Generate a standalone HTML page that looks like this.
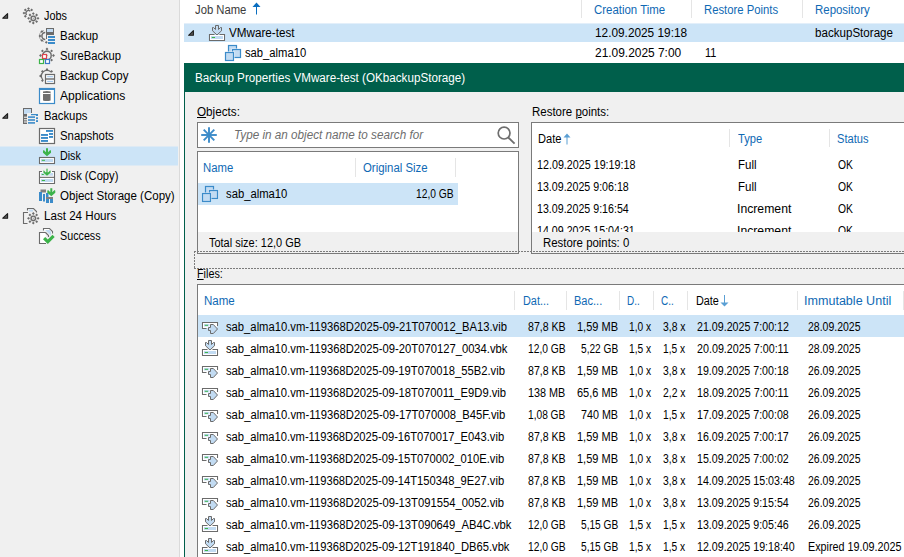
<!DOCTYPE html>
<html><head><meta charset="utf-8"><style>
html,body{margin:0;padding:0;}
body{width:904px;height:557px;position:relative;overflow:hidden;background:#fff;font-family:"Liberation Sans", sans-serif;font-size:12px;line-height:16px;}
u{text-decoration:underline;text-underline-offset:1px;}
</style></head><body>
<div style="position:absolute;left:0px;top:0px;width:179px;height:557px;background:#f0f0f0;"></div>
<div style="position:absolute;left:179px;top:0px;width:1px;height:557px;background:#dadada;"></div>
<div style="position:absolute;left:0px;top:146px;width:178px;height:1px;background:#deeaf4;"></div>
<div style="position:absolute;left:0px;top:147px;width:178px;height:18px;background:#cce4f7;"></div>
<div style="position:absolute;left:0px;top:165px;width:178px;height:1px;background:#deeaf4;"></div>
<div style="position:absolute;left:184px;top:23px;width:720px;height:1px;background:#e3effa;"></div>
<div style="position:absolute;left:184px;top:24px;width:720px;height:18px;background:#cce4f7;"></div>
<div style="position:absolute;left:581px;top:0px;width:1px;height:18px;background:#e5e5e5;"></div>
<div style="position:absolute;left:691px;top:0px;width:1px;height:18px;background:#e5e5e5;"></div>
<div style="position:absolute;left:802px;top:0px;width:1px;height:18px;background:#e5e5e5;"></div>
<div style="position:absolute;left:184px;top:63px;width:720px;height:29px;background:#005f4b;"></div>
<div style="position:absolute;left:184px;top:92px;width:1px;height:465px;background:#005f4b;"></div>
<div style="position:absolute;left:185px;top:92px;width:719px;height:465px;background:#f0f0f0;"></div>
<div style="position:absolute;left:197px;top:122px;width:322px;height:26px;box-sizing:border-box;border:1px solid #7a7a7a;background:#fff;"></div>
<div style="position:absolute;left:197px;top:151px;width:322px;height:103px;box-sizing:border-box;border:1px solid #7a7a7a;background:#fff;"></div>
<div style="position:absolute;left:198px;top:232px;width:320px;height:21px;background:#f0f0f0;"></div>
<div style="position:absolute;left:198px;top:183px;width:260px;height:22px;background:#cce4f7;"></div>
<div style="position:absolute;left:355px;top:158px;width:1px;height:19px;background:#e5e5e5;"></div>
<div style="position:absolute;left:455px;top:158px;width:1px;height:19px;background:#e5e5e5;"></div>
<div style="position:absolute;left:531px;top:122px;width:400px;height:132px;box-sizing:border-box;border:1px solid #7a7a7a;background:#fff;"></div>
<div style="position:absolute;left:729px;top:129px;width:1px;height:18px;background:#e5e5e5;"></div>
<div style="position:absolute;left:829px;top:129px;width:1px;height:18px;background:#e5e5e5;"></div>
<div style="position:absolute;left:197px;top:284px;width:720px;height:300px;box-sizing:border-box;border:1px solid #7a7a7a;background:#fff;"></div>
<div style="position:absolute;left:198px;top:315px;width:706px;height:22px;background:#cce4f7;"></div>
<div style="position:absolute;left:514px;top:291px;width:1px;height:19px;background:#e5e5e5;"></div>
<div style="position:absolute;left:566px;top:291px;width:1px;height:19px;background:#e5e5e5;"></div>
<div style="position:absolute;left:619px;top:291px;width:1px;height:19px;background:#e5e5e5;"></div>
<div style="position:absolute;left:653px;top:291px;width:1px;height:19px;background:#e5e5e5;"></div>
<div style="position:absolute;left:687px;top:291px;width:1px;height:19px;background:#e5e5e5;"></div>
<div style="position:absolute;left:797px;top:291px;width:1px;height:19px;background:#e5e5e5;"></div>
<div style="position:absolute;left:903px;top:291px;width:1px;height:19px;background:#e5e5e5;"></div>
<svg style="position:absolute;left:0;top:0;overflow:visible" width="1" height="1"><path d="M7.6 13.6 L7.6 18.2 L2.8 18.2 Z" fill="#5a5a5a" stroke="#1c1c1c" stroke-width="1.1" stroke-linejoin="round"/></svg>
<svg style="position:absolute;left:0;top:0;overflow:visible" width="1" height="1"><path d="M7.6 113.6 L7.6 118.19999999999999 L2.8 118.19999999999999 Z" fill="#5a5a5a" stroke="#1c1c1c" stroke-width="1.1" stroke-linejoin="round"/></svg>
<svg style="position:absolute;left:0;top:0;overflow:visible" width="1" height="1"><path d="M7.6 213.6 L7.6 218.2 L2.8 218.2 Z" fill="#5a5a5a" stroke="#1c1c1c" stroke-width="1.1" stroke-linejoin="round"/></svg>
<svg style="position:absolute;left:252px;top:2px" width="9" height="13" viewBox="0 0 9 13"><path d="M4.5 0.5 L8.5 5 L5 5 L5 12.5 L4 12.5 L4 5 L0.5 5 Z" fill="#0a6ec0"/></svg>
<svg style="position:absolute;left:0;top:0;overflow:visible" width="1" height="1"><path d="M193.4 30.7 L193.4 35.3 L188.6 35.3 Z" fill="#5a5a5a" stroke="#1c1c1c" stroke-width="1.1" stroke-linejoin="round"/></svg>
<svg style="position:absolute;left:563px;top:133px" width="8" height="12" viewBox="0 0 8 12"><path d="M4 0.5 L7.5 4.5 L4.5 4.5 L4.5 11.5 L3.5 11.5 L3.5 4.5 L0.5 4.5 Z" fill="#5a9fd4"/></svg>
<svg style="position:absolute;left:720px;top:294px" width="9" height="13" viewBox="0 0 9 13"><path d="M4.5 12.5 L8.5 8.5 L5 8.5 L5 1 L4 1 L4 8.5 L0.5 8.5 Z" fill="#5a9fd4"/></svg>
<svg style="position:absolute;left:22px;top:7px" width="18" height="18" viewBox="0 0 18 18"><rect x="5.50" y="0.60" width="2" height="2" fill="#6b6b6b" transform="rotate(45 6.50 1.60)"/><rect x="8.68" y="1.92" width="2" height="2" fill="#6b6b6b" transform="rotate(45 9.68 2.92)"/><rect x="2.32" y="8.28" width="2" height="2" fill="#6b6b6b" transform="rotate(45 3.32 9.28)"/><rect x="1.00" y="5.10" width="2" height="2" fill="#6b6b6b" transform="rotate(45 2.00 6.10)"/><rect x="2.32" y="1.92" width="2" height="2" fill="#6b6b6b" transform="rotate(45 3.32 2.92)"/><path d="M4.7 7.9 A2.5 2.5 0 0 1 8.3 4.3" fill="none" stroke="#6b6b6b" stroke-width="1.3"/><rect x="10.30" y="5.60" width="2" height="2" fill="#6b6b6b" transform="rotate(45 11.30 6.60)"/><rect x="13.62" y="6.98" width="2" height="2" fill="#6b6b6b" transform="rotate(45 14.62 7.98)"/><rect x="15.00" y="10.30" width="2" height="2" fill="#6b6b6b" transform="rotate(45 16.00 11.30)"/><rect x="13.62" y="13.62" width="2" height="2" fill="#6b6b6b" transform="rotate(45 14.62 14.62)"/><rect x="10.30" y="15.00" width="2" height="2" fill="#6b6b6b" transform="rotate(45 11.30 16.00)"/><rect x="6.98" y="13.62" width="2" height="2" fill="#6b6b6b" transform="rotate(45 7.98 14.62)"/><rect x="5.60" y="10.30" width="2" height="2" fill="#6b6b6b" transform="rotate(45 6.60 11.30)"/><rect x="6.98" y="6.98" width="2" height="2" fill="#6b6b6b" transform="rotate(45 7.98 7.98)"/><circle cx="11.3" cy="11.3" r="2.2" fill="none" stroke="#6b6b6b" stroke-width="1.4"/><circle cx="11.3" cy="11.3" r="3.20" fill="none" stroke="#6b6b6b" stroke-width="0.5" opacity="0.35"/><circle cx="11.3" cy="11.3" r="0.7" fill="#6b6b6b" opacity="0.6"/></svg>
<svg style="position:absolute;left:38px;top:27px" width="18" height="18" viewBox="0 0 18 18"><rect x="7.30" y="14.30" width="2" height="2" fill="#6b6b6b" transform="rotate(45 8.30 15.30)"/><rect x="2.85" y="12.45" width="2" height="2" fill="#6b6b6b" transform="rotate(45 3.85 13.45)"/><rect x="1.00" y="8.00" width="2" height="2" fill="#6b6b6b" transform="rotate(45 2.00 9.00)"/><rect x="2.85" y="3.55" width="2" height="2" fill="#6b6b6b" transform="rotate(45 3.85 4.55)"/><path d="M7.3 5.6 A3.3 3.3 0 0 0 7.3 12.4" fill="none" stroke="#6b6b6b" stroke-width="1.5"/><path d="M6 3.5 A5.6 5.6 0 0 0 6 14.5" fill="none" stroke="#6b6b6b" stroke-width="0.7" opacity="0.7"/><rect x="8" y="1" width="8" height="7" fill="#6b6b6b"/><rect x="9" y="2" width="6" height="3" fill="#c2dbf2"/><rect x="8" y="7" width="1" height="5" fill="#6b6b6b"/><rect x="10" y="9" width="7" height="2" fill="#3b8bc9"/><rect x="10" y="12" width="7" height="2" fill="#3b8bc9"/><rect x="10" y="15" width="7" height="2" fill="#3b8bc9"/></svg>
<svg style="position:absolute;left:38px;top:47px" width="18" height="18" viewBox="0 0 18 18"><rect x="8.00" y="1.00" width="2" height="2" fill="#6b6b6b" transform="rotate(45 9.00 2.00)"/><rect x="12.60" y="2.90" width="2" height="2" fill="#6b6b6b" transform="rotate(45 13.60 3.90)"/><rect x="14.50" y="7.50" width="2" height="2" fill="#6b6b6b" transform="rotate(45 15.50 8.50)"/><rect x="12.60" y="12.10" width="2" height="2" fill="#6b6b6b" transform="rotate(45 13.60 13.10)"/><rect x="8.00" y="14.00" width="2" height="2" fill="#6b6b6b" transform="rotate(45 9.00 15.00)"/><rect x="3.40" y="12.10" width="2" height="2" fill="#6b6b6b" transform="rotate(45 4.40 13.10)"/><rect x="1.50" y="7.50" width="2" height="2" fill="#6b6b6b" transform="rotate(45 2.50 8.50)"/><rect x="3.40" y="2.90" width="2" height="2" fill="#6b6b6b" transform="rotate(45 4.40 3.90)"/><circle cx="9" cy="8.5" r="4.2" fill="none" stroke="#6b6b6b" stroke-width="1.4"/><circle cx="9" cy="8.5" r="5.00" fill="none" stroke="#6b6b6b" stroke-width="0.5" opacity="0.35"/><circle cx="9" cy="8.5" r="0.7" fill="#6b6b6b" opacity="0.6"/><rect x="4.5" y="7.5" width="4" height="4" fill="#fff" stroke="#e0434b" stroke-width="1.2"/><rect x="1.5" y="12.5" width="4" height="4" fill="#fff" stroke="#3cb34a" stroke-width="1.2"/><rect x="7.5" y="12.5" width="4" height="4" fill="#fff" stroke="#3a78c9" stroke-width="1.2"/></svg>
<svg style="position:absolute;left:38px;top:67px" width="18" height="18" viewBox="0 0 18 18"><rect x="8.00" y="1.50" width="2" height="2" fill="#6b6b6b" transform="rotate(45 9.00 2.50)"/><rect x="1.50" y="8.00" width="2" height="2" fill="#6b6b6b" transform="rotate(45 2.50 9.00)"/><rect x="3.40" y="3.40" width="2" height="2" fill="#6b6b6b" transform="rotate(45 4.40 4.40)"/><rect x="12.60" y="3.40" width="2" height="2" fill="#6b6b6b" transform="rotate(45 13.60 4.40)"/><rect x="3.40" y="12.60" width="2" height="2" fill="#6b6b6b" transform="rotate(45 4.40 13.60)"/><path d="M5 13 A4.5 4.5 0 0 1 13 5" fill="none" stroke="#6b6b6b" stroke-width="1.2"/><rect x="7.5" y="7.5" width="9" height="9" fill="#fff" stroke="#6b6b6b" stroke-width="1.2"/><rect x="7" y="11.3" width="10" height="1.4" fill="#6b6b6b"/><rect x="9.2" y="9.1" width="5.8" height="1.2" fill="#a8cbee"/><rect x="9.2" y="13.8" width="5.8" height="1.2" fill="#a8cbee"/></svg>
<svg style="position:absolute;left:38px;top:87px" width="18" height="18" viewBox="0 0 18 18"><rect x="1.5" y="1.5" width="15" height="15" fill="#fff" stroke="#3b8bc9" stroke-width="1.2"/><rect x="1" y="1" width="16" height="2" fill="#3b8bc9"/><path d="M5 4.6 Q8.8 3.4 12.6 4.6 V13.4 Q8.8 14.8 5 13.4 Z" fill="#707070"/><rect x="5" y="6" width="7.6" height="1" fill="#fff"/></svg>
<svg style="position:absolute;left:22px;top:107px" width="18" height="18" viewBox="0 0 18 18"><rect x="1" y="1" width="9" height="16" fill="#6b6b6b"/><rect x="2" y="2" width="7" height="5" fill="#c2dbf2"/><rect x="2" y="9.7" width="3" height="1" fill="#fff"/><rect x="2" y="12.3" width="3" height="1" fill="#fff"/><rect x="2" y="14.5" width="3" height="1" fill="#fff"/><rect x="5" y="6" width="12" height="12" fill="#f0f0f0"/><rect x="9" y="7" width="7" height="1.2" fill="#3b8bc9"/><rect x="14" y="7" width="2" height="2" fill="#3b8bc9"/><rect x="6" y="9.3" width="7" height="1.6" fill="#3b8bc9"/><rect x="6" y="12.2" width="7" height="1.6" fill="#3b8bc9"/><rect x="6" y="15.1" width="7" height="1.6" fill="#3b8bc9"/><rect x="14" y="10.3" width="2" height="1.8" fill="#3b8bc9"/><rect x="14" y="13.2" width="2" height="1.8" fill="#3b8bc9"/></svg>
<svg style="position:absolute;left:38px;top:127px" width="18" height="18" viewBox="0 0 18 18"><rect x="1.5" y="1.5" width="15" height="15" fill="#fff" stroke="#6b6b6b" stroke-width="1.2"/><rect x="8" y="3" width="7" height="1.9" fill="#3b8bc9"/><rect x="11" y="6" width="4" height="1.9" fill="#3b8bc9"/><rect x="11" y="9" width="4" height="1.9" fill="#3b8bc9"/><rect x="3" y="7" width="7" height="1.9" fill="#3b8bc9"/><rect x="3" y="10" width="7" height="1.9" fill="#3b8bc9"/><rect x="3" y="13" width="7" height="1.9" fill="#3b8bc9"/></svg>
<svg style="position:absolute;left:38px;top:147px" width="18" height="18" viewBox="0 0 18 18"><path transform="translate(0 0)" d="M8 1.3 H10 V5.2 L12.2 3 L13 3.8 V5.8 L9 9.3 L5 5.8 V3.8 L5.8 3 L8 5.2 Z" fill="#3cb34a"/><rect x="1.5" y="10.5" width="15" height="6" fill="#fff" stroke="#6b6b6b" stroke-width="1.1"/><rect x="3" y="12" width="12" height="3" fill="#c2dbf2"/><rect x="3.8" y="12.8" width="3.2" height="1" fill="#3cb34a"/></svg>
<svg style="position:absolute;left:38px;top:167px" width="18" height="18" viewBox="0 0 18 18"><path d="M4 4.5 H1.5 V16.5 H16.5 V4.5 H14" fill="#fff" stroke="#6b6b6b" stroke-width="1.1"/><rect x="1.5" y="9.8" width="15" height="1.1" fill="#6b6b6b"/><rect x="3" y="6" width="12" height="2.7" fill="#c2dbf2"/><rect x="3.8" y="7" width="2" height="1" fill="#3cb34a"/><rect x="3" y="12" width="12" height="3" fill="#c2dbf2"/><rect x="3.8" y="13" width="3.2" height="1" fill="#3cb34a"/><path d="M8 1.3 H10 V5.2 L12.2 3 L13 3.8 V5.8 L9 9.3 L5 5.8 V3.8 L5.8 3 L8 5.2 Z" fill="#3cb34a" stroke="#f0f0f0" stroke-width="0.8"/></svg>
<svg style="position:absolute;left:38px;top:187px" width="18" height="18" viewBox="0 0 18 18"><rect x="2.5" y="2.5" width="5.5" height="3" fill="#808080"/><rect x="1" y="5" width="3" height="9" fill="#3b8bc9"/><rect x="5" y="7" width="2" height="7.5" fill="#3b8bc9"/><rect x="8" y="6" width="2.5" height="4" fill="#3b8bc9"/><rect x="8" y="10" width="7" height="2" fill="#808080"/><rect x="8" y="12" width="3" height="4" fill="#3b8bc9"/><rect x="12" y="12" width="3" height="4" fill="#3b8bc9"/><path transform="translate(4.3 0)" d="M8 1.3 H10 V5.2 L12.2 3 L13 3.8 V5.8 L9 9.3 L5 5.8 V3.8 L5.8 3 L8 5.2 Z" fill="#3cb34a"/></svg>
<svg style="position:absolute;left:22px;top:207px" width="18" height="18" viewBox="0 0 18 18"><path d="M5.5 3.5 V1.5 H11.5 L14.5 4.5 V5.5" fill="none" stroke="#6b6b6b" stroke-width="1.1"/><rect x="7" y="2.6" width="4" height="2" fill="#c2dbf2"/><path d="M6 5.5 H1.5 V16.5 H5.5" fill="none" stroke="#6b6b6b" stroke-width="1.1"/><rect x="10.30" y="5.50" width="2" height="2" fill="#6b6b6b" transform="rotate(45 11.30 6.50)"/><rect x="13.69" y="6.91" width="2" height="2" fill="#6b6b6b" transform="rotate(45 14.69 7.91)"/><rect x="15.10" y="10.30" width="2" height="2" fill="#6b6b6b" transform="rotate(45 16.10 11.30)"/><rect x="13.69" y="13.69" width="2" height="2" fill="#6b6b6b" transform="rotate(45 14.69 14.69)"/><rect x="10.30" y="15.10" width="2" height="2" fill="#6b6b6b" transform="rotate(45 11.30 16.10)"/><rect x="6.91" y="13.69" width="2" height="2" fill="#6b6b6b" transform="rotate(45 7.91 14.69)"/><rect x="5.50" y="10.30" width="2" height="2" fill="#6b6b6b" transform="rotate(45 6.50 11.30)"/><rect x="6.91" y="6.91" width="2" height="2" fill="#6b6b6b" transform="rotate(45 7.91 7.91)"/><circle cx="11.3" cy="11.3" r="2.2" fill="none" stroke="#6b6b6b" stroke-width="1.4"/><circle cx="11.3" cy="11.3" r="3.30" fill="none" stroke="#6b6b6b" stroke-width="0.5" opacity="0.35"/><circle cx="11.3" cy="11.3" r="0.7" fill="#6b6b6b" opacity="0.6"/></svg>
<svg style="position:absolute;left:38px;top:227px" width="18" height="18" viewBox="0 0 18 18"><path d="M5.5 3.5 V1.5 H11.5 L14.5 4.5 V6.5" fill="#fff" stroke="#6b6b6b" stroke-width="1.1"/><path d="M7 3 H11.5 L13 4.5 V8.5 Z" fill="#c2dbf2"/><path d="M7.5 5.5 H1.5 V16.5 H8 M7.5 5.5 L10.5 8.5 V10" fill="#fff" stroke="#6b6b6b" stroke-width="1.1"/><path d="M5 12.2 L7.2 10 L9.8 12.6 L14.5 7.8 L16.7 10 L9.8 16.9 Z" fill="#3cb34a"/></svg>
<svg style="position:absolute;left:208px;top:24px" width="18" height="18" viewBox="0 0 18 18"><path d="M7.5 1.5 H10.5 V5.5 L12.5 3.5 H13.5 V6.8 L9 11 L4.5 6.8 V3.5 H5.5 L7.5 5.5 Z" fill="#c2dbf2" stroke="#6b6b6b" stroke-width="1"/><path d="M6.5 10.5 H1.5 V16.5 H16.5 V10.5 H11.5" fill="none" stroke="#6b6b6b" stroke-width="1.1"/><rect x="2" y="11" width="14" height="5" fill="#fff"/><rect x="3" y="12" width="12" height="3" fill="#c2dbf2"/><rect x="3.8" y="13" width="3.2" height="1" fill="#3cb34a"/></svg>
<svg style="position:absolute;left:224px;top:44px" width="18" height="18" viewBox="0 0 18 18"><rect x="4.5" y="1.5" width="8" height="8" fill="#c2dbf2" stroke="#3b8bc9" stroke-width="1.2"/><rect x="7.5" y="4.5" width="10" height="10" fill="#fff"/><rect x="8.5" y="5.5" width="8" height="8" fill="#c2dbf2" stroke="#3b8bc9" stroke-width="1.2"/><rect x="0.5" y="7.5" width="10" height="10" fill="#fff"/><rect x="1.5" y="8.5" width="8" height="8" fill="#c2dbf2" stroke="#3b8bc9" stroke-width="1.2"/></svg>
<svg style="position:absolute;left:201px;top:185px" width="18" height="18" viewBox="0 0 18 18"><rect x="4.5" y="1.5" width="8" height="8" fill="#c2dbf2" stroke="#3b8bc9" stroke-width="1.2"/><rect x="7.5" y="4.5" width="10" height="10" fill="#e4eefa"/><rect x="8.5" y="5.5" width="8" height="8" fill="#c2dbf2" stroke="#3b8bc9" stroke-width="1.2"/><rect x="0.5" y="7.5" width="10" height="10" fill="#e4eefa"/><rect x="1.5" y="8.5" width="8" height="8" fill="#c2dbf2" stroke="#3b8bc9" stroke-width="1.2"/></svg>
<svg style="position:absolute;left:200px;top:126px" width="18" height="18" viewBox="0 0 18 18"><g stroke="#3b8bc9" stroke-width="1.9" stroke-linecap="butt"><line x1="9" y1="1.2" x2="9" y2="16.8"/><line x1="1.2" y1="9" x2="16.8" y2="9"/><line x1="3.7" y1="3.7" x2="14.3" y2="14.3"/><line x1="14.3" y1="3.7" x2="3.7" y2="14.3"/></g></svg>
<svg style="position:absolute;left:496px;top:126px" width="20" height="20" viewBox="0 0 20 20"><circle cx="8.1" cy="7.1" r="5.9" fill="none" stroke="#6e6e6e" stroke-width="1.7"/><line x1="12" y1="11.3" x2="18.6" y2="17.6" stroke="#6e6e6e" stroke-width="1.9"/></svg>
<svg style="position:absolute;left:201px;top:318px" width="18" height="18" viewBox="0 0 18 18"><path d="M5.5 10.5 H1.5 V4.5 H16.5 V8" fill="none" stroke="#6b6b6b" stroke-width="1.1"/><rect x="2" y="5" width="14" height="5" fill="#fff"/><rect x="3" y="6" width="5.5" height="2.5" fill="#c2dbf2"/><rect x="3.8" y="6.8" width="3.2" height="1" fill="#3cb34a"/><path d="M7.5 9.5 H9.5 V6.5 H12.3 L16.5 11 L12.3 15.5 H9.5 V12.5 H7.5 Z" fill="#c2dbf2" stroke="#6b6b6b" stroke-width="1"/></svg>
<svg style="position:absolute;left:201px;top:339px" width="18" height="18" viewBox="0 0 18 18"><path d="M7.5 1.5 H10.5 V5.5 L12.5 3.5 H13.5 V6.8 L9 11 L4.5 6.8 V3.5 H5.5 L7.5 5.5 Z" fill="#c2dbf2" stroke="#6b6b6b" stroke-width="1"/><path d="M6.5 10.5 H1.5 V16.5 H16.5 V10.5 H11.5" fill="none" stroke="#6b6b6b" stroke-width="1.1"/><rect x="2" y="11" width="14" height="5" fill="#fff"/><rect x="3" y="12" width="12" height="3" fill="#c2dbf2"/><rect x="3.8" y="13" width="3.2" height="1" fill="#3cb34a"/></svg>
<svg style="position:absolute;left:201px;top:362px" width="18" height="18" viewBox="0 0 18 18"><path d="M5.5 10.5 H1.5 V4.5 H16.5 V8" fill="none" stroke="#6b6b6b" stroke-width="1.1"/><rect x="2" y="5" width="14" height="5" fill="#fff"/><rect x="3" y="6" width="5.5" height="2.5" fill="#c2dbf2"/><rect x="3.8" y="6.8" width="3.2" height="1" fill="#3cb34a"/><path d="M7.5 9.5 H9.5 V6.5 H12.3 L16.5 11 L12.3 15.5 H9.5 V12.5 H7.5 Z" fill="#c2dbf2" stroke="#6b6b6b" stroke-width="1"/></svg>
<svg style="position:absolute;left:201px;top:384px" width="18" height="18" viewBox="0 0 18 18"><path d="M5.5 10.5 H1.5 V4.5 H16.5 V8" fill="none" stroke="#6b6b6b" stroke-width="1.1"/><rect x="2" y="5" width="14" height="5" fill="#fff"/><rect x="3" y="6" width="5.5" height="2.5" fill="#c2dbf2"/><rect x="3.8" y="6.8" width="3.2" height="1" fill="#3cb34a"/><path d="M7.5 9.5 H9.5 V6.5 H12.3 L16.5 11 L12.3 15.5 H9.5 V12.5 H7.5 Z" fill="#c2dbf2" stroke="#6b6b6b" stroke-width="1"/></svg>
<svg style="position:absolute;left:201px;top:406px" width="18" height="18" viewBox="0 0 18 18"><path d="M5.5 10.5 H1.5 V4.5 H16.5 V8" fill="none" stroke="#6b6b6b" stroke-width="1.1"/><rect x="2" y="5" width="14" height="5" fill="#fff"/><rect x="3" y="6" width="5.5" height="2.5" fill="#c2dbf2"/><rect x="3.8" y="6.8" width="3.2" height="1" fill="#3cb34a"/><path d="M7.5 9.5 H9.5 V6.5 H12.3 L16.5 11 L12.3 15.5 H9.5 V12.5 H7.5 Z" fill="#c2dbf2" stroke="#6b6b6b" stroke-width="1"/></svg>
<svg style="position:absolute;left:201px;top:428px" width="18" height="18" viewBox="0 0 18 18"><path d="M5.5 10.5 H1.5 V4.5 H16.5 V8" fill="none" stroke="#6b6b6b" stroke-width="1.1"/><rect x="2" y="5" width="14" height="5" fill="#fff"/><rect x="3" y="6" width="5.5" height="2.5" fill="#c2dbf2"/><rect x="3.8" y="6.8" width="3.2" height="1" fill="#3cb34a"/><path d="M7.5 9.5 H9.5 V6.5 H12.3 L16.5 11 L12.3 15.5 H9.5 V12.5 H7.5 Z" fill="#c2dbf2" stroke="#6b6b6b" stroke-width="1"/></svg>
<svg style="position:absolute;left:201px;top:450px" width="18" height="18" viewBox="0 0 18 18"><path d="M5.5 10.5 H1.5 V4.5 H16.5 V8" fill="none" stroke="#6b6b6b" stroke-width="1.1"/><rect x="2" y="5" width="14" height="5" fill="#fff"/><rect x="3" y="6" width="5.5" height="2.5" fill="#c2dbf2"/><rect x="3.8" y="6.8" width="3.2" height="1" fill="#3cb34a"/><path d="M7.5 9.5 H9.5 V6.5 H12.3 L16.5 11 L12.3 15.5 H9.5 V12.5 H7.5 Z" fill="#c2dbf2" stroke="#6b6b6b" stroke-width="1"/></svg>
<svg style="position:absolute;left:201px;top:472px" width="18" height="18" viewBox="0 0 18 18"><path d="M5.5 10.5 H1.5 V4.5 H16.5 V8" fill="none" stroke="#6b6b6b" stroke-width="1.1"/><rect x="2" y="5" width="14" height="5" fill="#fff"/><rect x="3" y="6" width="5.5" height="2.5" fill="#c2dbf2"/><rect x="3.8" y="6.8" width="3.2" height="1" fill="#3cb34a"/><path d="M7.5 9.5 H9.5 V6.5 H12.3 L16.5 11 L12.3 15.5 H9.5 V12.5 H7.5 Z" fill="#c2dbf2" stroke="#6b6b6b" stroke-width="1"/></svg>
<svg style="position:absolute;left:201px;top:494px" width="18" height="18" viewBox="0 0 18 18"><path d="M5.5 10.5 H1.5 V4.5 H16.5 V8" fill="none" stroke="#6b6b6b" stroke-width="1.1"/><rect x="2" y="5" width="14" height="5" fill="#fff"/><rect x="3" y="6" width="5.5" height="2.5" fill="#c2dbf2"/><rect x="3.8" y="6.8" width="3.2" height="1" fill="#3cb34a"/><path d="M7.5 9.5 H9.5 V6.5 H12.3 L16.5 11 L12.3 15.5 H9.5 V12.5 H7.5 Z" fill="#c2dbf2" stroke="#6b6b6b" stroke-width="1"/></svg>
<svg style="position:absolute;left:201px;top:515px" width="18" height="18" viewBox="0 0 18 18"><path d="M7.5 1.5 H10.5 V5.5 L12.5 3.5 H13.5 V6.8 L9 11 L4.5 6.8 V3.5 H5.5 L7.5 5.5 Z" fill="#c2dbf2" stroke="#6b6b6b" stroke-width="1"/><path d="M6.5 10.5 H1.5 V16.5 H16.5 V10.5 H11.5" fill="none" stroke="#6b6b6b" stroke-width="1.1"/><rect x="2" y="11" width="14" height="5" fill="#fff"/><rect x="3" y="12" width="12" height="3" fill="#c2dbf2"/><rect x="3.8" y="13" width="3.2" height="1" fill="#3cb34a"/></svg>
<svg style="position:absolute;left:201px;top:537px" width="18" height="18" viewBox="0 0 18 18"><path d="M7.5 1.5 H10.5 V5.5 L12.5 3.5 H13.5 V6.8 L9 11 L4.5 6.8 V3.5 H5.5 L7.5 5.5 Z" fill="#c2dbf2" stroke="#6b6b6b" stroke-width="1"/><path d="M6.5 10.5 H1.5 V16.5 H16.5 V10.5 H11.5" fill="none" stroke="#6b6b6b" stroke-width="1.1"/><rect x="2" y="11" width="14" height="5" fill="#fff"/><rect x="3" y="12" width="12" height="3" fill="#c2dbf2"/><rect x="3.8" y="13" width="3.2" height="1" fill="#3cb34a"/></svg>
<div style="position:absolute;top:7.80px;white-space:nowrap;color:#000;transform:scaleX(0.9034);transform-origin:0 0;left:43.60px;">Jobs</div>
<div style="position:absolute;top:27.80px;white-space:nowrap;color:#000;transform:scaleX(0.9541);transform-origin:0 0;left:59.50px;">Backup</div>
<div style="position:absolute;top:47.80px;white-space:nowrap;color:#000;transform:scaleX(0.9346);transform-origin:0 0;left:59.50px;">SureBackup</div>
<div style="position:absolute;top:67.80px;white-space:nowrap;color:#000;transform:scaleX(0.9583);transform-origin:0 0;left:59.50px;">Backup Copy</div>
<div style="position:absolute;top:87.80px;white-space:nowrap;color:#000;transform:scaleX(1.0107);transform-origin:0 0;left:59.50px;">Applications</div>
<div style="position:absolute;top:107.80px;white-space:nowrap;color:#000;transform:scaleX(0.9408);transform-origin:0 0;left:43.60px;">Backups</div>
<div style="position:absolute;top:127.80px;white-space:nowrap;color:#000;transform:scaleX(0.9487);transform-origin:0 0;left:59.50px;">Snapshots</div>
<div style="position:absolute;top:147.80px;white-space:nowrap;color:#000;transform:scaleX(0.8918);transform-origin:0 0;left:59.50px;">Disk</div>
<div style="position:absolute;top:167.80px;white-space:nowrap;color:#000;transform:scaleX(0.9318);transform-origin:0 0;left:59.50px;">Disk (Copy)</div>
<div style="position:absolute;top:187.80px;white-space:nowrap;color:#000;transform:scaleX(0.9607);transform-origin:0 0;left:59.50px;">Object Storage (Copy)</div>
<div style="position:absolute;top:207.80px;white-space:nowrap;color:#000;transform:scaleX(0.9664);transform-origin:0 0;left:43.60px;">Last 24 Hours</div>
<div style="position:absolute;top:227.80px;white-space:nowrap;color:#000;transform:scaleX(0.8952);transform-origin:0 0;left:59.50px;">Success</div>
<div style="position:absolute;top:1.80px;white-space:nowrap;color:#3a3a3a;transform:scaleX(0.9397);transform-origin:0 0;left:195.00px;">Job Name</div>
<div style="position:absolute;top:1.80px;white-space:nowrap;color:#0f69b4;transform:scaleX(0.9530);transform-origin:0 0;left:594.00px;">Creation Time</div>
<div style="position:absolute;top:1.80px;white-space:nowrap;color:#0f69b4;transform:scaleX(0.9415);transform-origin:0 0;left:704.00px;">Restore Points</div>
<div style="position:absolute;top:1.80px;white-space:nowrap;color:#0f69b4;transform:scaleX(0.9537);transform-origin:0 0;left:815.00px;">Repository</div>
<div style="position:absolute;top:24.80px;white-space:nowrap;color:#000;transform:scaleX(0.9719);transform-origin:0 0;left:229.40px;">VMware-test</div>
<div style="position:absolute;top:24.80px;white-space:nowrap;color:#000;transform:scaleX(0.9856);transform-origin:0 0;left:594.90px;">12.09.2025 19:18</div>
<div style="position:absolute;top:24.80px;white-space:nowrap;color:#000;transform:scaleX(0.9661);transform-origin:0 0;left:815.00px;">backupStorage</div>
<div style="position:absolute;top:44.80px;white-space:nowrap;color:#000;transform:scaleX(0.9360);transform-origin:0 0;left:245.00px;">sab_alma10</div>
<div style="position:absolute;top:44.80px;white-space:nowrap;color:#000;transform:scaleX(0.9934);transform-origin:0 0;left:594.90px;">21.09.2025 7:00</div>
<div style="position:absolute;top:44.80px;white-space:nowrap;color:#000;transform:scaleX(0.9074);transform-origin:0 0;left:705.00px;">11</div>
<div style="position:absolute;top:69.80px;white-space:nowrap;color:#fff;transform:scaleX(0.9711);transform-origin:0 0;left:195.40px;">Backup Properties VMware-test (OKbackupStorage)</div>
<div style="position:absolute;top:103.80px;white-space:nowrap;color:#000;transform:scaleX(0.9752);transform-origin:0 0;left:197.00px;"><u>O</u>bjects:</div>
<div style="position:absolute;top:126.80px;white-space:nowrap;color:#6d6d6d;transform:scaleX(0.9753);transform-origin:0 0;font-style:italic;left:234.02px;">Type in an object name to search for</div>
<div style="position:absolute;top:159.80px;white-space:nowrap;color:#0f69b4;transform:scaleX(0.9447);transform-origin:0 0;left:203.00px;">Name</div>
<div style="position:absolute;top:159.80px;white-space:nowrap;color:#0f69b4;transform:scaleX(0.9495);transform-origin:0 0;left:363.00px;">Original Size</div>
<div style="position:absolute;top:185.80px;white-space:nowrap;color:#000;transform:scaleX(0.9390);transform-origin:0 0;left:226.00px;">sab_alma10</div>
<div style="position:absolute;top:185.80px;white-space:nowrap;color:#000;transform:scaleX(0.8541);transform-origin:0 0;left:416.40px;">12,0 GB</div>
<div style="position:absolute;top:234.80px;white-space:nowrap;color:#000;transform:scaleX(0.9135);transform-origin:0 0;left:209.00px;">Total size: 12,0 GB</div>
<div style="position:absolute;top:103.80px;white-space:nowrap;color:#000;transform:scaleX(0.9568);transform-origin:0 0;left:532.00px;">Restore <u>p</u>oints:</div>
<div style="position:absolute;top:130.80px;white-space:nowrap;color:#000;transform:scaleX(0.9228);transform-origin:0 0;left:538.00px;">Date</div>
<div style="position:absolute;top:130.80px;white-space:nowrap;color:#0f69b4;transform:scaleX(0.9263);transform-origin:0 0;left:738.00px;">Type</div>
<div style="position:absolute;top:130.80px;white-space:nowrap;color:#0f69b4;transform:scaleX(0.9259);transform-origin:0 0;left:837.00px;">Status</div>
<div style="position:absolute;top:156.80px;white-space:nowrap;color:#000;transform:scaleX(0.8938);transform-origin:0 0;left:537.00px;">12.09.2025 19:19:18</div>
<div style="position:absolute;top:156.80px;white-space:nowrap;color:#000;transform:scaleX(0.9588);transform-origin:0 0;left:738.00px;">Full</div>
<div style="position:absolute;top:156.80px;white-space:nowrap;color:#000;transform:scaleX(0.8596);transform-origin:0 0;left:838.00px;">OK</div>
<div style="position:absolute;top:178.80px;white-space:nowrap;color:#000;transform:scaleX(0.8867);transform-origin:0 0;left:537.00px;">13.09.2025 9:06:18</div>
<div style="position:absolute;top:178.80px;white-space:nowrap;color:#000;transform:scaleX(0.9588);transform-origin:0 0;left:738.00px;">Full</div>
<div style="position:absolute;top:178.80px;white-space:nowrap;color:#000;transform:scaleX(0.8596);transform-origin:0 0;left:838.00px;">OK</div>
<div style="position:absolute;top:200.80px;white-space:nowrap;color:#000;transform:scaleX(0.8872);transform-origin:0 0;left:537.00px;">13.09.2025 9:16:54</div>
<div style="position:absolute;top:200.80px;white-space:nowrap;color:#000;transform:scaleX(1.0185);transform-origin:0 0;left:736.98px;">Increment</div>
<div style="position:absolute;top:200.80px;white-space:nowrap;color:#000;transform:scaleX(0.8596);transform-origin:0 0;left:838.00px;">OK</div>
<div style="position:absolute;top:222.80px;white-space:nowrap;color:#000;transform:scaleX(0.8882);transform-origin:0 0;left:537.00px;">14.09.2025 15:04:31</div>
<div style="position:absolute;top:222.80px;white-space:nowrap;color:#000;transform:scaleX(1.0185);transform-origin:0 0;left:736.98px;">Increment</div>
<div style="position:absolute;top:222.80px;white-space:nowrap;color:#000;transform:scaleX(0.8596);transform-origin:0 0;left:838.00px;">OK</div>
<div style="position:absolute;top:265.80px;white-space:nowrap;color:#000;transform:scaleX(0.8999);transform-origin:0 0;left:197.00px;"><u>F</u>iles:</div>
<div style="position:absolute;top:292.80px;white-space:nowrap;color:#0f69b4;transform:scaleX(0.9618);transform-origin:0 0;left:203.90px;">Name</div>
<div style="position:absolute;top:292.80px;white-space:nowrap;color:#0f69b4;transform:scaleX(0.9065);transform-origin:0 0;left:523.00px;">Dat...</div>
<div style="position:absolute;top:292.80px;white-space:nowrap;color:#0f69b4;transform:scaleX(0.9190);transform-origin:0 0;left:574.00px;">Bac...</div>
<div style="position:absolute;top:292.80px;white-space:nowrap;color:#0f69b4;transform:scaleX(0.8293);transform-origin:0 0;left:627.00px;">D..</div>
<div style="position:absolute;top:292.80px;white-space:nowrap;color:#0f69b4;transform:scaleX(0.8293);transform-origin:0 0;left:661.00px;">C..</div>
<div style="position:absolute;top:292.80px;white-space:nowrap;color:#000;transform:scaleX(0.9036);transform-origin:0 0;left:695.80px;">Date</div>
<div style="position:absolute;top:292.80px;white-space:nowrap;color:#0f69b4;transform:scaleX(1.0466);transform-origin:0 0;left:804.05px;">Immutable Until</div>
<div style="position:absolute;top:318.50px;white-space:nowrap;color:#000;transform:scaleX(0.9367);transform-origin:0 0;left:226.20px;">sab_alma10.vm-119368D2025-09-21T070012_BA13.vib</div>
<div style="position:absolute;top:318.50px;white-space:nowrap;color:#000;transform:scaleX(0.8807);transform-origin:0 0;left:527.70px;">87,8 KB</div>
<div style="position:absolute;top:318.50px;white-space:nowrap;color:#000;transform:scaleX(0.9175);transform-origin:0 0;left:577.00px;">1,59 MB</div>
<div style="position:absolute;top:318.50px;white-space:nowrap;color:#000;transform:scaleX(0.8495);transform-origin:0 0;left:629.00px;">1,0 x</div>
<div style="position:absolute;top:318.50px;white-space:nowrap;color:#000;transform:scaleX(0.8649);transform-origin:0 0;left:663.00px;">3,8 x</div>
<div style="position:absolute;top:318.50px;white-space:nowrap;color:#000;transform:scaleX(0.8886);transform-origin:0 0;left:697.00px;">21.09.2025 7:00:12</div>
<div style="position:absolute;top:318.50px;white-space:nowrap;color:#000;transform:scaleX(0.8744);transform-origin:0 0;left:808.00px;">28.09.2025</div>
<div style="position:absolute;top:340.50px;white-space:nowrap;color:#000;transform:scaleX(0.9362);transform-origin:0 0;left:226.20px;">sab_alma10.vm-119368D2025-09-20T070127_0034.vbk</div>
<div style="position:absolute;top:340.50px;white-space:nowrap;color:#000;transform:scaleX(0.8541);transform-origin:0 0;left:527.70px;">12,0 GB</div>
<div style="position:absolute;top:340.50px;white-space:nowrap;color:#000;transform:scaleX(0.8450);transform-origin:0 0;left:580.80px;">5,22 GB</div>
<div style="position:absolute;top:340.50px;white-space:nowrap;color:#000;transform:scaleX(0.8495);transform-origin:0 0;left:629.00px;">1,5 x</div>
<div style="position:absolute;top:340.50px;white-space:nowrap;color:#000;transform:scaleX(0.8495);transform-origin:0 0;left:663.00px;">1,5 x</div>
<div style="position:absolute;top:340.50px;white-space:nowrap;color:#000;transform:scaleX(0.8949);transform-origin:0 0;left:697.00px;">20.09.2025 7:00:11</div>
<div style="position:absolute;top:340.50px;white-space:nowrap;color:#000;transform:scaleX(0.8744);transform-origin:0 0;left:808.00px;">28.09.2025</div>
<div style="position:absolute;top:362.50px;white-space:nowrap;color:#000;transform:scaleX(0.9338);transform-origin:0 0;left:226.20px;">sab_alma10.vm-119368D2025-09-19T070018_55B2.vib</div>
<div style="position:absolute;top:362.50px;white-space:nowrap;color:#000;transform:scaleX(0.8807);transform-origin:0 0;left:527.70px;">87,8 KB</div>
<div style="position:absolute;top:362.50px;white-space:nowrap;color:#000;transform:scaleX(0.9175);transform-origin:0 0;left:577.00px;">1,59 MB</div>
<div style="position:absolute;top:362.50px;white-space:nowrap;color:#000;transform:scaleX(0.8495);transform-origin:0 0;left:629.00px;">1,0 x</div>
<div style="position:absolute;top:362.50px;white-space:nowrap;color:#000;transform:scaleX(0.8649);transform-origin:0 0;left:663.00px;">3,8 x</div>
<div style="position:absolute;top:362.50px;white-space:nowrap;color:#000;transform:scaleX(0.8872);transform-origin:0 0;left:697.00px;">19.09.2025 7:00:18</div>
<div style="position:absolute;top:362.50px;white-space:nowrap;color:#000;transform:scaleX(0.8744);transform-origin:0 0;left:808.00px;">26.09.2025</div>
<div style="position:absolute;top:384.50px;white-space:nowrap;color:#000;transform:scaleX(0.9344);transform-origin:0 0;left:226.20px;">sab_alma10.vm-119368D2025-09-18T070011_E9D9.vib</div>
<div style="position:absolute;top:384.50px;white-space:nowrap;color:#000;transform:scaleX(0.9020);transform-origin:0 0;left:528.00px;">138 MB</div>
<div style="position:absolute;top:384.50px;white-space:nowrap;color:#000;transform:scaleX(0.9153);transform-origin:0 0;left:577.10px;">65,6 MB</div>
<div style="position:absolute;top:384.50px;white-space:nowrap;color:#000;transform:scaleX(0.8495);transform-origin:0 0;left:629.00px;">1,0 x</div>
<div style="position:absolute;top:384.50px;white-space:nowrap;color:#000;transform:scaleX(0.8649);transform-origin:0 0;left:663.00px;">2,2 x</div>
<div style="position:absolute;top:384.50px;white-space:nowrap;color:#000;transform:scaleX(0.8949);transform-origin:0 0;left:697.00px;">18.09.2025 7:00:11</div>
<div style="position:absolute;top:384.50px;white-space:nowrap;color:#000;transform:scaleX(0.8744);transform-origin:0 0;left:808.00px;">26.09.2025</div>
<div style="position:absolute;top:406.50px;white-space:nowrap;color:#000;transform:scaleX(0.9373);transform-origin:0 0;left:226.20px;">sab_alma10.vm-119368D2025-09-17T070008_B45F.vib</div>
<div style="position:absolute;top:406.50px;white-space:nowrap;color:#000;transform:scaleX(0.8473);transform-origin:0 0;left:528.00px;">1,08 GB</div>
<div style="position:absolute;top:406.50px;white-space:nowrap;color:#000;transform:scaleX(0.8948);transform-origin:0 0;left:581.00px;">740 MB</div>
<div style="position:absolute;top:406.50px;white-space:nowrap;color:#000;transform:scaleX(0.8495);transform-origin:0 0;left:629.00px;">1,0 x</div>
<div style="position:absolute;top:406.50px;white-space:nowrap;color:#000;transform:scaleX(0.8495);transform-origin:0 0;left:663.00px;">1,5 x</div>
<div style="position:absolute;top:406.50px;white-space:nowrap;color:#000;transform:scaleX(0.8872);transform-origin:0 0;left:697.00px;">17.09.2025 7:00:08</div>
<div style="position:absolute;top:406.50px;white-space:nowrap;color:#000;transform:scaleX(0.8744);transform-origin:0 0;left:808.00px;">26.09.2025</div>
<div style="position:absolute;top:428.50px;white-space:nowrap;color:#000;transform:scaleX(0.9312);transform-origin:0 0;left:226.20px;">sab_alma10.vm-119368D2025-09-16T070017_E043.vib</div>
<div style="position:absolute;top:428.50px;white-space:nowrap;color:#000;transform:scaleX(0.8807);transform-origin:0 0;left:527.70px;">87,8 KB</div>
<div style="position:absolute;top:428.50px;white-space:nowrap;color:#000;transform:scaleX(0.9175);transform-origin:0 0;left:577.00px;">1,59 MB</div>
<div style="position:absolute;top:428.50px;white-space:nowrap;color:#000;transform:scaleX(0.8495);transform-origin:0 0;left:629.00px;">1,0 x</div>
<div style="position:absolute;top:428.50px;white-space:nowrap;color:#000;transform:scaleX(0.8649);transform-origin:0 0;left:663.00px;">3,8 x</div>
<div style="position:absolute;top:428.50px;white-space:nowrap;color:#000;transform:scaleX(0.8872);transform-origin:0 0;left:697.00px;">16.09.2025 7:00:17</div>
<div style="position:absolute;top:428.50px;white-space:nowrap;color:#000;transform:scaleX(0.8744);transform-origin:0 0;left:808.00px;">26.09.2025</div>
<div style="position:absolute;top:450.50px;white-space:nowrap;color:#000;transform:scaleX(0.9312);transform-origin:0 0;left:226.20px;">sab_alma10.vm-119368D2025-09-15T070002_010E.vib</div>
<div style="position:absolute;top:450.50px;white-space:nowrap;color:#000;transform:scaleX(0.8807);transform-origin:0 0;left:527.70px;">87,8 KB</div>
<div style="position:absolute;top:450.50px;white-space:nowrap;color:#000;transform:scaleX(0.9175);transform-origin:0 0;left:577.00px;">1,59 MB</div>
<div style="position:absolute;top:450.50px;white-space:nowrap;color:#000;transform:scaleX(0.8495);transform-origin:0 0;left:629.00px;">1,0 x</div>
<div style="position:absolute;top:450.50px;white-space:nowrap;color:#000;transform:scaleX(0.8649);transform-origin:0 0;left:663.00px;">3,8 x</div>
<div style="position:absolute;top:450.50px;white-space:nowrap;color:#000;transform:scaleX(0.8872);transform-origin:0 0;left:697.00px;">15.09.2025 7:00:02</div>
<div style="position:absolute;top:450.50px;white-space:nowrap;color:#000;transform:scaleX(0.8744);transform-origin:0 0;left:808.00px;">26.09.2025</div>
<div style="position:absolute;top:472.50px;white-space:nowrap;color:#000;transform:scaleX(0.9312);transform-origin:0 0;left:226.20px;">sab_alma10.vm-119368D2025-09-14T150348_9E27.vib</div>
<div style="position:absolute;top:472.50px;white-space:nowrap;color:#000;transform:scaleX(0.8807);transform-origin:0 0;left:527.70px;">87,8 KB</div>
<div style="position:absolute;top:472.50px;white-space:nowrap;color:#000;transform:scaleX(0.9175);transform-origin:0 0;left:577.00px;">1,59 MB</div>
<div style="position:absolute;top:472.50px;white-space:nowrap;color:#000;transform:scaleX(0.8495);transform-origin:0 0;left:629.00px;">1,0 x</div>
<div style="position:absolute;top:472.50px;white-space:nowrap;color:#000;transform:scaleX(0.8649);transform-origin:0 0;left:663.00px;">3,8 x</div>
<div style="position:absolute;top:472.50px;white-space:nowrap;color:#000;transform:scaleX(0.8882);transform-origin:0 0;left:697.00px;">14.09.2025 15:03:48</div>
<div style="position:absolute;top:472.50px;white-space:nowrap;color:#000;transform:scaleX(0.8744);transform-origin:0 0;left:808.00px;">26.09.2025</div>
<div style="position:absolute;top:494.50px;white-space:nowrap;color:#000;transform:scaleX(0.9353);transform-origin:0 0;left:226.20px;">sab_alma10.vm-119368D2025-09-13T091554_0052.vib</div>
<div style="position:absolute;top:494.50px;white-space:nowrap;color:#000;transform:scaleX(0.8807);transform-origin:0 0;left:527.70px;">87,8 KB</div>
<div style="position:absolute;top:494.50px;white-space:nowrap;color:#000;transform:scaleX(0.9175);transform-origin:0 0;left:577.00px;">1,59 MB</div>
<div style="position:absolute;top:494.50px;white-space:nowrap;color:#000;transform:scaleX(0.8495);transform-origin:0 0;left:629.00px;">1,0 x</div>
<div style="position:absolute;top:494.50px;white-space:nowrap;color:#000;transform:scaleX(0.8649);transform-origin:0 0;left:663.00px;">3,8 x</div>
<div style="position:absolute;top:494.50px;white-space:nowrap;color:#000;transform:scaleX(0.8872);transform-origin:0 0;left:697.00px;">13.09.2025 9:15:54</div>
<div style="position:absolute;top:494.50px;white-space:nowrap;color:#000;transform:scaleX(0.8744);transform-origin:0 0;left:808.00px;">26.09.2025</div>
<div style="position:absolute;top:516.50px;white-space:nowrap;color:#000;transform:scaleX(0.9350);transform-origin:0 0;left:226.20px;">sab_alma10.vm-119368D2025-09-13T090649_AB4C.vbk</div>
<div style="position:absolute;top:516.50px;white-space:nowrap;color:#000;transform:scaleX(0.8541);transform-origin:0 0;left:527.70px;">12,0 GB</div>
<div style="position:absolute;top:516.50px;white-space:nowrap;color:#000;transform:scaleX(0.8450);transform-origin:0 0;left:580.80px;">5,15 GB</div>
<div style="position:absolute;top:516.50px;white-space:nowrap;color:#000;transform:scaleX(0.8495);transform-origin:0 0;left:629.00px;">1,5 x</div>
<div style="position:absolute;top:516.50px;white-space:nowrap;color:#000;transform:scaleX(0.8495);transform-origin:0 0;left:663.00px;">1,5 x</div>
<div style="position:absolute;top:516.50px;white-space:nowrap;color:#000;transform:scaleX(0.8872);transform-origin:0 0;left:697.00px;">13.09.2025 9:05:46</div>
<div style="position:absolute;top:516.50px;white-space:nowrap;color:#000;transform:scaleX(0.8744);transform-origin:0 0;left:808.00px;">26.09.2025</div>
<div style="position:absolute;top:538.50px;white-space:nowrap;color:#000;transform:scaleX(0.9325);transform-origin:0 0;left:226.20px;">sab_alma10.vm-119368D2025-09-12T191840_DB65.vbk</div>
<div style="position:absolute;top:538.50px;white-space:nowrap;color:#000;transform:scaleX(0.8541);transform-origin:0 0;left:527.70px;">12,0 GB</div>
<div style="position:absolute;top:538.50px;white-space:nowrap;color:#000;transform:scaleX(0.8450);transform-origin:0 0;left:580.80px;">5,15 GB</div>
<div style="position:absolute;top:538.50px;white-space:nowrap;color:#000;transform:scaleX(0.8495);transform-origin:0 0;left:629.00px;">1,5 x</div>
<div style="position:absolute;top:538.50px;white-space:nowrap;color:#000;transform:scaleX(0.8495);transform-origin:0 0;left:663.00px;">1,5 x</div>
<div style="position:absolute;top:538.50px;white-space:nowrap;color:#000;transform:scaleX(0.8874);transform-origin:0 0;left:697.00px;">12.09.2025 19:18:40</div>
<div style="position:absolute;top:538.50px;white-space:nowrap;color:#000;transform:scaleX(0.8975);transform-origin:0 0;left:808.00px;">Expired 19.09.2025</div>
<div style="position:absolute;left:532px;top:232px;width:372px;height:21px;background:#f0f0f0"></div>
<svg style="position:absolute;left:194px;top:251px" width="710" height="18"><g stroke="#7c7c7c" stroke-width="1" stroke-dasharray="2 1" fill="none"><line x1="0" y1="0.5" x2="710" y2="0.5"/><line x1="0" y1="17.5" x2="710" y2="17.5"/><line x1="0.5" y1="0" x2="0.5" y2="18"/></g></svg>
<div style="position:absolute;top:234.80px;white-space:nowrap;color:#000;transform:scaleX(0.9512);transform-origin:0 0;left:542.60px;">Restore points: 0</div>
</body></html>
